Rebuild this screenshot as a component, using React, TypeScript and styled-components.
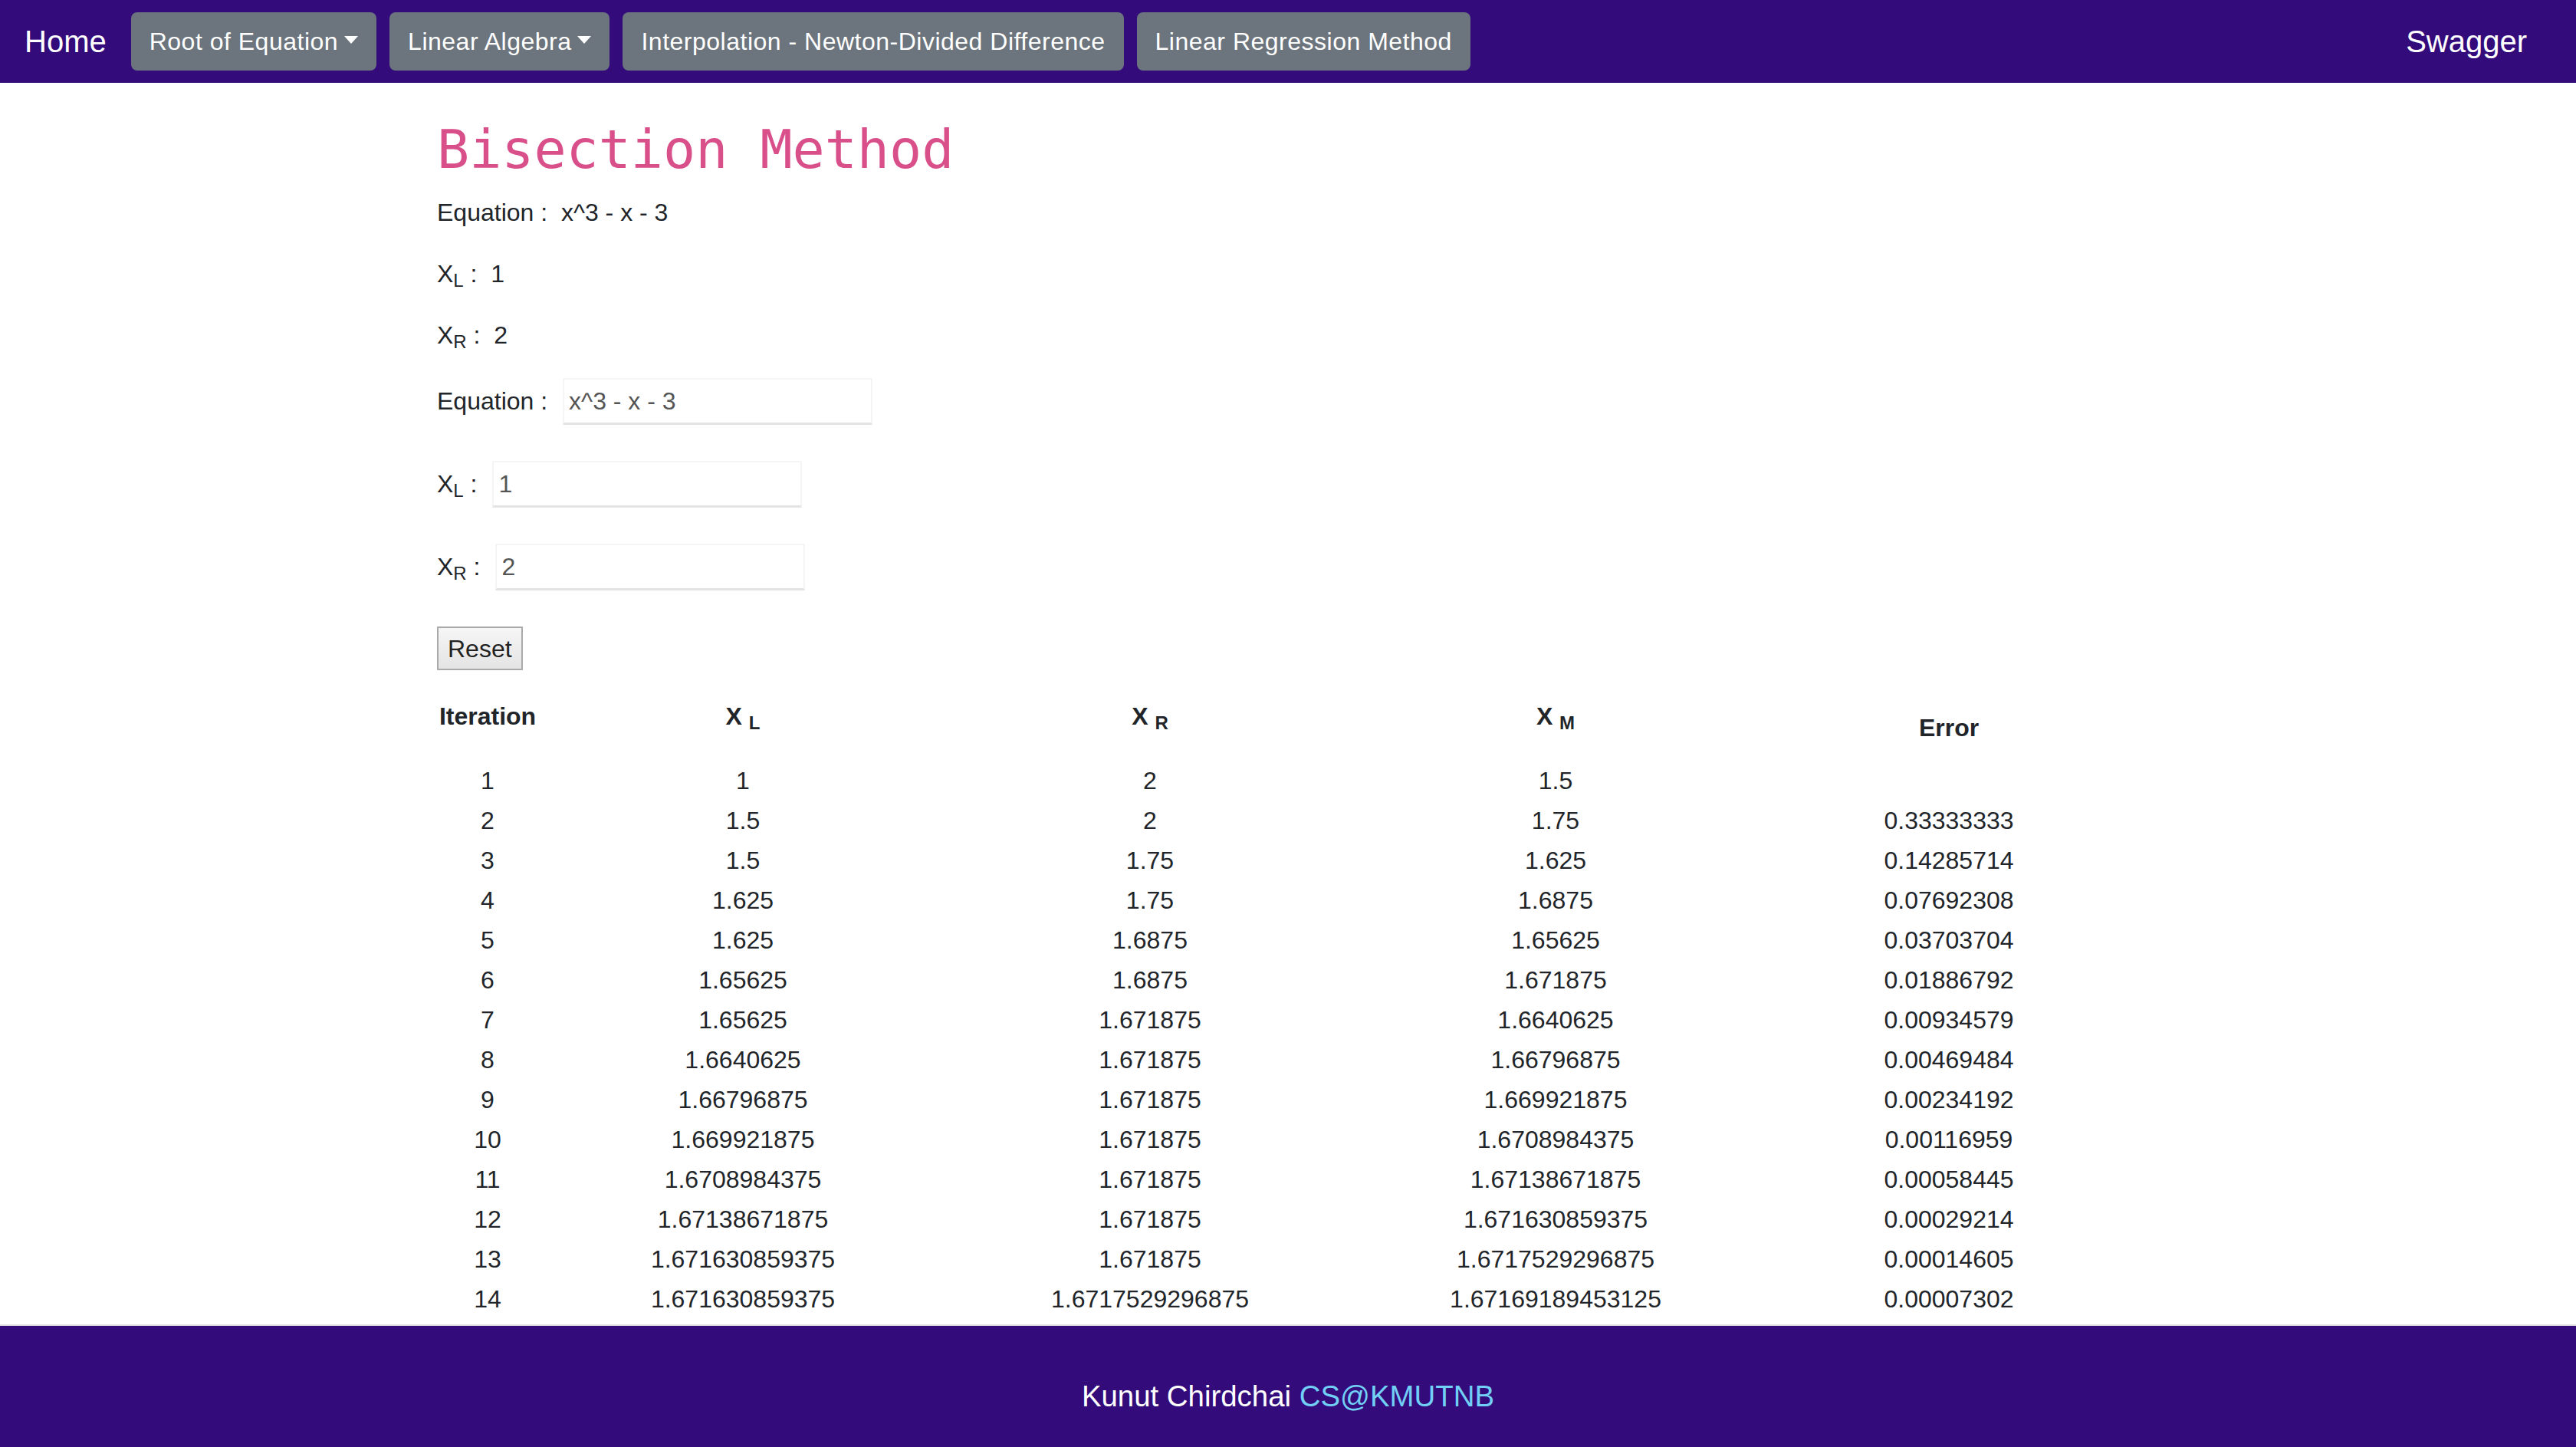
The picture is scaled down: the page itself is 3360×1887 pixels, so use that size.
import React from "react";
import styled, { createGlobalStyle } from "styled-components";

const GlobalStyle = createGlobalStyle`
  html, body { margin: 0; padding: 0; }
  body {
    background: #ffffff;
    color: #212529;
    font-family: "Liberation Sans", Arial, sans-serif;
    font-size: 32px;
    line-height: 1.5;
  }
  * { box-sizing: border-box; }
`;

const Page = styled.div`
  height: 100vh;
  display: flex;
  flex-direction: column;
  overflow: hidden;
`;

const Navbar = styled.nav`
  flex: 0 0 108px;
  display: flex;
  align-items: center;
  padding: 0 32px;
  background: #330b7b;
`;

const Brand = styled.a<{ $right?: boolean }>`
  font-size: 40px;
  line-height: 60px;
  color: #ffffff;
  text-decoration: none;
  margin-right: 32px;
  margin-left: ${(p) => (p.$right ? "auto" : "0")};
`;

const NavButtons = styled.div`
  display: flex;
  align-items: center;
  gap: 17px;
`;

const NavButton = styled.button<{ $caret?: boolean }>`
  height: 76px;
  padding: 0 24px;
  border: none;
  border-radius: 8px;
  background: #6c757d;
  color: #ffffff;
  font-family: "Liberation Sans", Arial, sans-serif;
  font-size: 32px;
  line-height: 48px;
  letter-spacing: 0.5px;
  white-space: nowrap;
  display: flex;
  align-items: center;

  &::after {
    content: ${(p) => (p.$caret ? '""' : "none")};
    display: inline-block;
    margin-left: 8px;
    margin-top: -4px;
    border-top: 10px solid #ffffff;
    border-left: 9px solid transparent;
    border-right: 9px solid transparent;
  }
`;

const Main = styled.main`
  flex: 1 1 auto;
  overflow: hidden;
`;

const Container = styled.div`
  max-width: 2280px;
  margin: 0 auto;
  padding: 0 30px;
`;

const Title = styled.h1`
  margin: 39px 0 10px;
  font-family: "DejaVu Sans Mono", "Liberation Mono", monospace;
  font-weight: 400;
  font-size: 70px;
  line-height: 96px;
  color: #d94f8a;
`;

const ValueLine = styled.p`
  margin: 0 0 32px;
  line-height: 48px;
  white-space: pre;
`;

const Sub = styled.sub`
  font-size: 75%;
  line-height: 0;
  position: relative;
  vertical-align: baseline;
  bottom: -0.25em;
`;

const InputRow = styled.div`
  display: flex;
  align-items: baseline;
  height: 61px;
  margin-bottom: 47px;
`;

const Label = styled.label`
  margin-right: 20px;
  line-height: 48px;
  white-space: pre;
`;

const TextInput = styled.input`
  width: 404px;
  height: 61px;
  padding: 0 6px;
  border: 2px solid #f5f5f5;
  border-bottom: 3px solid #e4e4e4;
  background: #ffffff;
  color: #555555;
  font-family: "Liberation Sans", Arial, sans-serif;
  font-size: 32px;
  outline: none;
`;

const ResetButton = styled.button`
  display: block;
  height: 57px;
  padding: 0 12px;
  border: 2px solid #a9a9a9;
  border-radius: 1px;
  background: linear-gradient(#f6f6f6, #e4e4e4);
  color: #222222;
  font-family: "Liberation Sans", Arial, sans-serif;
  font-size: 32px;
  line-height: 48px;
`;

const Table = styled.table`
  margin-top: 36px;
  width: 2220px;
  table-layout: fixed;
  border-collapse: collapse;
`;

const HeadCell = styled.th<{ $drop?: number }>`
  height: 82px;
  padding: ${(p) => p.$drop ?? 0}px 0 0;
  vertical-align: top;
  text-align: center;
  font-weight: 700;
  line-height: 48px;
  white-space: nowrap;
`;

const Cell = styled.td`
  padding: 2px 0;
  text-align: center;
  line-height: 48px;
  white-space: nowrap;
`;

const Footer = styled.footer`
  flex: 0 0 160px;
  border-top: 2px solid #e3e3e3;
  background: #330b7b;
  padding-top: 63px;
  text-align: center;
  color: #ffffff;
  font-size: 38.4px;
  line-height: 57.6px;
`;

const FooterLink = styled.a`
  color: #72cff5;
  text-decoration: none;
`;

const rows: [number, string, string, string, string][] = [
  [1, "1", "2", "1.5", ""],
  [2, "1.5", "2", "1.75", "0.33333333"],
  [3, "1.5", "1.75", "1.625", "0.14285714"],
  [4, "1.625", "1.75", "1.6875", "0.07692308"],
  [5, "1.625", "1.6875", "1.65625", "0.03703704"],
  [6, "1.65625", "1.6875", "1.671875", "0.01886792"],
  [7, "1.65625", "1.671875", "1.6640625", "0.00934579"],
  [8, "1.6640625", "1.671875", "1.66796875", "0.00469484"],
  [9, "1.66796875", "1.671875", "1.669921875", "0.00234192"],
  [10, "1.669921875", "1.671875", "1.6708984375", "0.00116959"],
  [11, "1.6708984375", "1.671875", "1.67138671875", "0.00058445"],
  [12, "1.67138671875", "1.671875", "1.671630859375", "0.00029214"],
  [13, "1.671630859375", "1.671875", "1.6717529296875", "0.00014605"],
  [14, "1.671630859375", "1.6717529296875", "1.67169189453125", "0.00007302"],
];

const colWidths = [132, 534, 528, 530, 496];

export default function App() {
  return (
    <Page>
      <GlobalStyle />
      <Navbar>
        <Brand href="#">Home</Brand>
        <NavButtons>
          <NavButton $caret>Root of Equation</NavButton>
          <NavButton $caret>Linear Algebra</NavButton>
          <NavButton>Interpolation - Newton-Divided Difference</NavButton>
          <NavButton>Linear Regression Method</NavButton>
        </NavButtons>
        <Brand href="#" $right>
          Swagger
        </Brand>
      </Navbar>
      <Main>
        <Container>
          <Title>Bisection Method</Title>
          <ValueLine>{"Equation :  x^3 - x - 3"}</ValueLine>
          <ValueLine>
            X<Sub>L</Sub>
            {" :  1"}
          </ValueLine>
          <ValueLine>
            X<Sub>R</Sub>
            {" :  2"}
          </ValueLine>

          <InputRow>
            <Label>Equation :</Label>
            <TextInput defaultValue="x^3 - x - 3" />
          </InputRow>
          <InputRow>
            <Label>
              X<Sub>L</Sub> :
            </Label>
            <TextInput defaultValue="1" />
          </InputRow>
          <InputRow>
            <Label>
              X<Sub>R</Sub> :
            </Label>
            <TextInput defaultValue="2" />
          </InputRow>
          <ResetButton>Reset</ResetButton>

          <Table>
            <colgroup>
              {colWidths.map((w, i) => (
                <col key={i} style={{ width: w }} />
              ))}
            </colgroup>
            <thead>
              <tr>
                <HeadCell>Iteration</HeadCell>
                <HeadCell>
                  X <Sub>L</Sub>
                </HeadCell>
                <HeadCell>
                  X <Sub>R</Sub>
                </HeadCell>
                <HeadCell>
                  X <Sub>M</Sub>
                </HeadCell>
                <HeadCell $drop={15}>Error</HeadCell>
              </tr>
            </thead>
            <tbody>
              {rows.map((r) => (
                <tr key={r[0]}>
                  <Cell>{r[0]}</Cell>
                  <Cell>{r[1]}</Cell>
                  <Cell>{r[2]}</Cell>
                  <Cell>{r[3]}</Cell>
                  <Cell>{r[4]}</Cell>
                </tr>
              ))}
            </tbody>
          </Table>
        </Container>
      </Main>
      <Footer>
        Kunut Chirdchai <FooterLink href="#">CS@KMUTNB</FooterLink>
      </Footer>
    </Page>
  );
}
